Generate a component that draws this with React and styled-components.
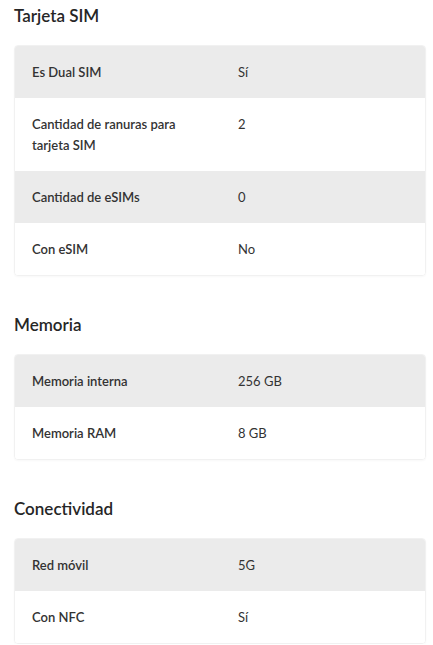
import React from 'react';
import styled, { createGlobalStyle } from 'styled-components';

const sections = [
  {
    title: 'Tarjeta SIM',
    rows: [
      ['Es Dual SIM', 'Sí'],
      ['Cantidad de ranuras para tarjeta SIM', '2'],
      ['Cantidad de eSIMs', '0'],
      ['Con eSIM', 'No'],
    ],
  },
  {
    title: 'Memoria',
    rows: [
      ['Memoria interna', '256 GB'],
      ['Memoria RAM', '8 GB'],
    ],
  },
  {
    title: 'Conectividad',
    rows: [
      ['Red móvil', '5G'],
      ['Con NFC', 'Sí'],
    ],
  },
];

const App = () => {
  return (
    <>
      <GlobalStyle />
      <Page>
        {sections.map((section) => (
          <Section key={section.title}>
            <Title>{section.title}</Title>
            <Card>
              {section.rows.map(([label, value], i) => (
                <Row key={label} $shaded={i % 2 === 0}>
                  <Label>{label}</Label>
                  <Value>{value}</Value>
                </Row>
              ))}
            </Card>
          </Section>
        ))}
      </Page>
    </>
  );
};

export default App;

const GlobalStyle = createGlobalStyle`
  body {
    margin: 0;
    background: #fff;
    font-family: Lato, "Open Sans", sans-serif;
    color: #222;
  }
`

const Page = styled.div`
  display: flex;
  flex-direction: column;
  gap: 37px;
  padding: 4px 7px 0 14px;
`

const Section = styled.section`
  display: flex;
  flex-direction: column;
  gap: 17px;
`

const Title = styled.h2`
  margin: 0;
  font-size: 17px;
  line-height: 24px;
  font-weight: 600;
  color: #262626;
`

const Card = styled.div`
  border: 1px solid #f1f1f1;
  border-radius: 4px;
  overflow: hidden;
  box-shadow: 0 1px 2px rgba(0, 0, 0, 0.03);
`

const Row = styled.div`
  display: grid;
  grid-template-columns: 206px 1fr;
  padding: 16px 17px 15px;
  font-size: 13px;
  line-height: 21px;
  background: ${(p) => (p.$shaded ? '#ebebeb' : '#fff')};
`

const Label = styled.div`
  font-weight: 600;
  padding-right: 22px;
  color: #333;
`

const Value = styled.div`
  font-weight: 400;
  color: #333;
`
